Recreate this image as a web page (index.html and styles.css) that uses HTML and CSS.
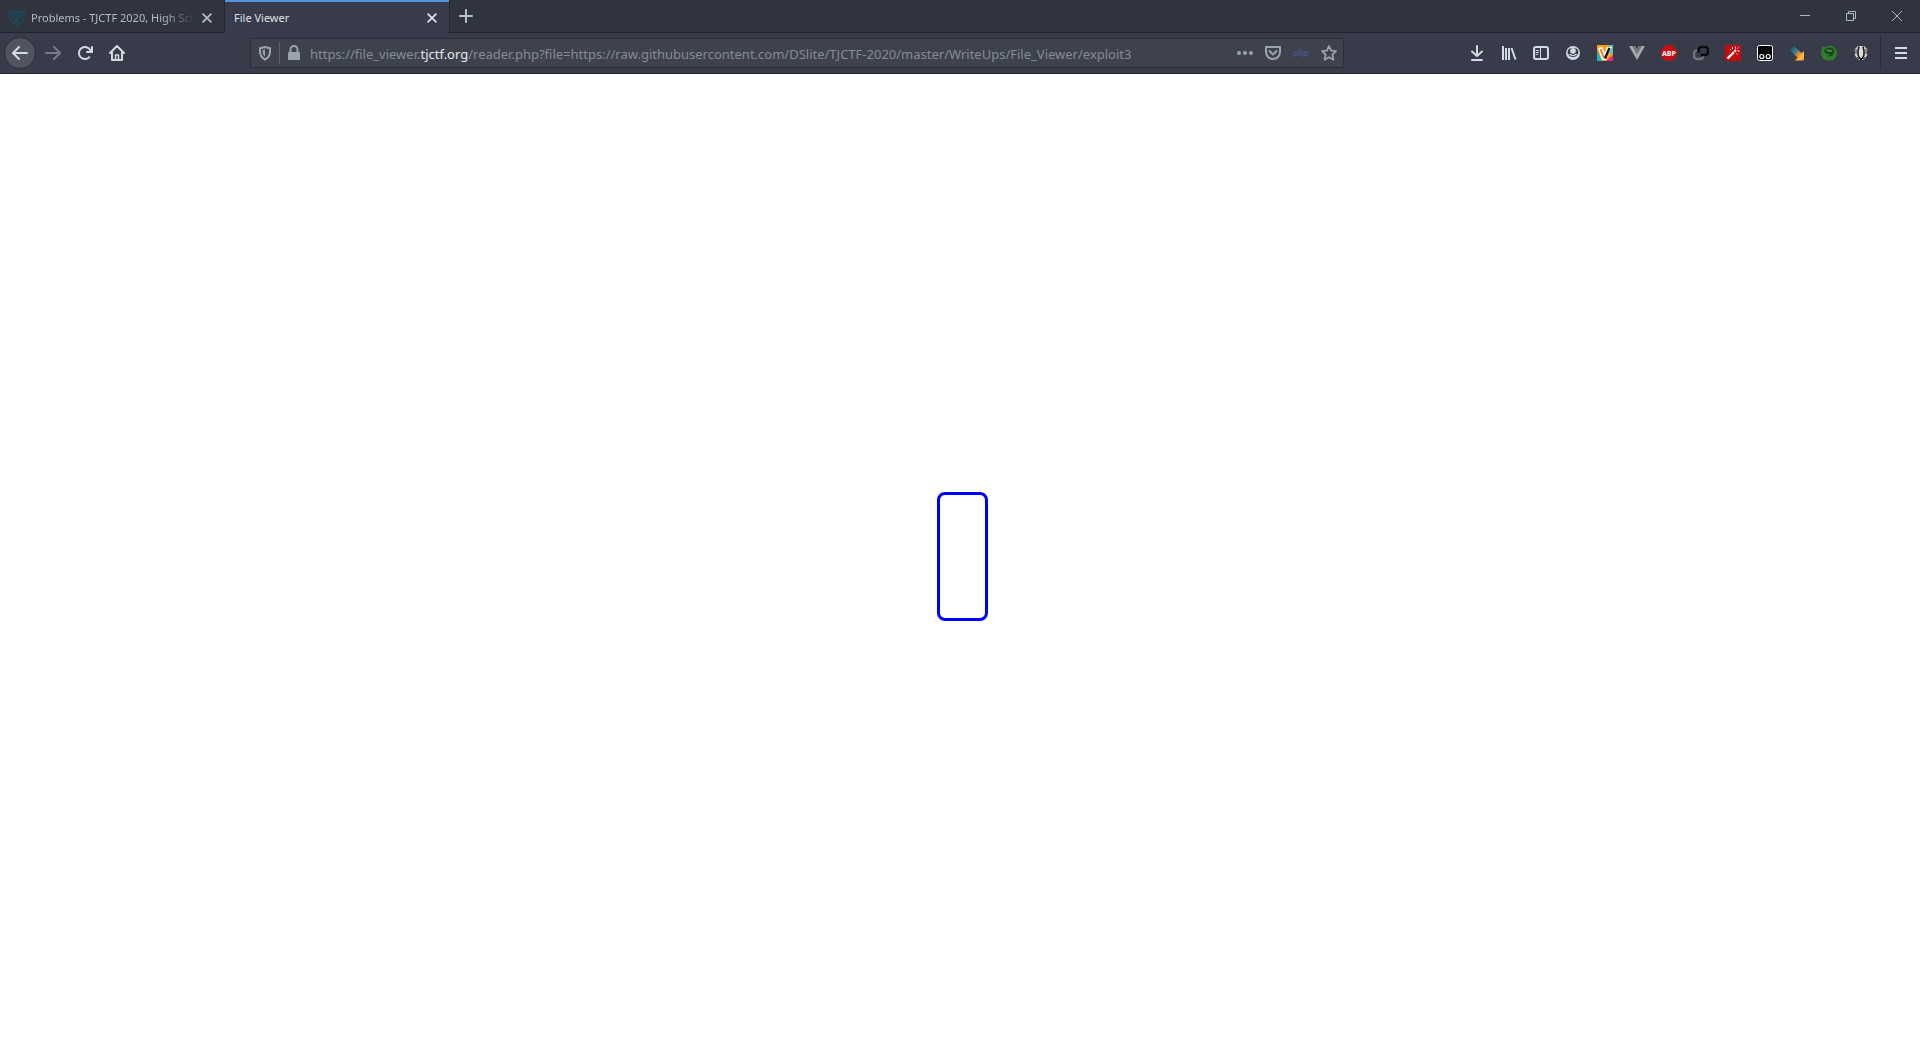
FILE: index.html
```html
<!DOCTYPE html>
<html lang="en">
<head>
<meta charset="utf-8">
<title>File Viewer</title>
<link rel="stylesheet" href="styles.css">
</head>
<body>
<header class="chrome">
  <div class="tabstrip">
    <div class="tab">
      <svg class="favicon" viewBox="0 0 16 16" fill="none" stroke="#1b4a5c" stroke-width="1.5"><path d="M1 2h14v6l-3 5-4 2-4-2-3-5zM3 4l5 9 5-9M5 3l3 3 3-3M8 6v8"/></svg>
      <span class="tab-title faded">Problems - TJCTF 2020, High School</span>
      <button class="close" aria-label="Close tab"><svg viewBox="0 0 16 16" class="icon"><path d="M3.500 3.500l9 9M12.500 3.500l-9 9" stroke="currentColor" stroke-width="2" stroke-linecap="round"/></svg></button>
    </div>
    <div class="tab active">
      <span class="tab-title">File Viewer</span>
      <button class="close" aria-label="Close tab"><svg viewBox="0 0 16 16" class="icon"><path d="M3.500 3.500l9 9M12.500 3.500l-9 9" stroke="currentColor" stroke-width="2" stroke-linecap="round"/></svg></button>
    </div>
    <div class="strip-rest">
      <button class="new-tab" aria-label="New tab"><svg viewBox="0 0 16 16" class="icon"><path d="M8 2v12M2 8h12" stroke="currentColor" stroke-width="2" stroke-linecap="round"/></svg></button>
      <div class="window-controls">
        <button aria-label="Minimize"><svg viewBox="0 0 12 12"><path d="M1 5.500h10"/></svg></button>
        <button aria-label="Restore"><svg viewBox="0 0 12 12"><path d="M1.500 3.500h7v7h-7zM3.500 3V1.500h7v7H9"/></svg></button>
        <button aria-label="Close"><svg viewBox="0 0 12 12"><path d="M1 1l10 10M11 1L1 11"/></svg></button>
      </div>
    </div>
  </div>
  <nav class="toolbar">
    <div class="nav-buttons">
      <button class="back" aria-label="Back"><svg viewBox="0 0 16 16" class="icon line"><path d="M15 8H1.500M7 2L1 8l6 6"/></svg></button>
      <button class="dim" aria-label="Forward"><svg viewBox="0 0 16 16" class="icon line"><path d="M1 8h13.500M9 2l6 6-6 6"/></svg></button>
      <button aria-label="Reload"><svg viewBox="0 0 16 16" class="icon"><path fill="currentColor" d="M15 1a1 1 0 0 0-1 1v2.418A6.995 6.995 0 1 0 8 15a6.954 6.954 0 0 0 4.950-2.050 1 1 0 0 0-1.414-1.414A5.019 5.019 0 1 1 12.549 6H10a1 1 0 0 0 0 2h5a1 1 0 0 0 1-1V2a1 1 0 0 0-1-1z"/></svg></button>
      <button aria-label="Home"><svg viewBox="0 0 16 16" class="icon line"><path d="M1 8l7-7 7 7M3 7v8h10V7"/><path d="M6.500 15v-5h3v5" stroke-width="1.500"/></svg></button>
    </div>
    <div class="urlbar">
      <button aria-label="Tracking protection"><svg viewBox="0 0 16 16" class="icon"><path d="M8 2l5 1.200v3.300c0 4-2 6.500-5 8-3-1.500-5-4-5-8V3.200z" fill="none" stroke="currentColor" stroke-width="2" stroke-linejoin="round"/><path d="M8 4.500v7c-1.800-1.500-2.500-3-2.500-6.300z" fill="currentColor"/></svg></button>
      <span class="divider"></span>
      <button class="lock" aria-label="Site information"><svg viewBox="0 0 16 16" class="icon"><path d="M4.500 7V4.500a3.500 3.500 0 0 1 7 0V7" fill="none" stroke="currentColor" stroke-width="2"/><rect x="2" y="7" width="12" height="8" rx="1" fill="currentColor"/></svg></button>
      <div class="url">https://file_viewer.<b>tjctf.org</b>/reader.php?file=https://raw.githubusercontent.com/DSlite/TJCTF-2020/master/WriteUps/File_Viewer/exploit3</div>
      <button aria-label="Page actions"><svg viewBox="0 0 16 16" class="icon"><g fill="currentColor"><circle cx="2" cy="8" r="2"/><circle cx="8" cy="8" r="2"/><circle cx="14" cy="8" r="2"/></g></svg></button>
      <button aria-label="Save to Pocket"><svg viewBox="0 0 16 16" class="icon line"><path d="M1 2h14v5a7 7 0 0 1-14 0zM4.500 6L8 9.500 11.500 6"/></svg></button>
      <button class="php" aria-label="PHP">php</button>
      <button aria-label="Bookmark"><svg viewBox="0 0 16 16" class="icon line"><path d="M8 1l2.100 4.700 4.900.500-3.600 3.400 1 5.100L8 12.200l-4.400 2.500 1-5.100L1 6.200l4.900-.5z" stroke-width="1.800"/></svg></button>
    </div>
    <div class="actions">
      <button aria-label="Downloads"><svg viewBox="0 0 16 16" class="icon line"><path d="M8 1v10M3 6.500L8 11l5-4.500M3 15h10"/></svg></button>
      <button aria-label="Library"><svg viewBox="0 0 16 16" class="icon line"><path d="M2 1v14M5 3v12M8 3v12M10.500 3l4 11.500" stroke-linecap="butt"/></svg></button>
      <button aria-label="Sidebars"><svg viewBox="0 0 16 16" class="icon line"><rect x="1" y="2" width="14" height="12" rx="2"/><path d="M7.500 2v12M3 5.500h2.500M3 7.500h2.500M3 9.500h1.500" stroke-width="1"/></svg></button>
      <button aria-label="Account"><svg viewBox="0 0 16 16" class="icon"><circle cx="8" cy="8" r="7" fill="currentColor"/><path d="M4.500 3.500h7a5 5 0 0 1 1.300 6q-1.500-.300-2.300-.800a3.500 3.500 0 0 1-5 0q-.800.500-2.300.800a5 5 0 0 1 1.300-6z" fill="#383c4a"/><circle cx="8" cy="6" r="2.800" fill="currentColor"/><path d="M4 10.500q4 2.500 8 0" fill="none" stroke="#383c4a"/></svg></button>
      <button aria-label="Violentmonkey"><svg viewBox="0 0 16 16" class="icon"><rect width="16" height="16" rx="1" fill="#ff9d16"/><path d="M0 5l5 11H0z" fill="#15b6c3"/><path d="M16 0v10l-5-3 1-7z" fill="#57c7ae"/><path d="M9 16l7-6v6z" fill="#ed2681"/><path d="M1 3l4 12h4l6-13h-5l-2 6-3-6z" fill="#fff"/><path d="M3.500 4L7 13" stroke="#f47622" stroke-width="2"/><path d="M12.500 3L8 13.500" stroke="#15151a" stroke-width="2.500"/></svg></button>
      <button aria-label="Vue devtools"><svg viewBox="0 0 16 16" class="icon"><path d="M0 1h3.500L8 9l4.500-8H16L8 15z" fill="#aaa"/><path d="M3.500 1H6.500L8 4l1.500-3h3L8 9z" fill="#777"/></svg></button>
      <button aria-label="Adblock Plus"><svg viewBox="0 0 16 16" class="icon"><path d="M5 0h6l5 5v6l-5 5H5l-5-5V5z" fill="#c70d13"/><text x="8" y="11" text-anchor="middle" class="abp">ABP</text></svg></button>
      <button aria-label="Link extension"><svg viewBox="0 0 16 16" class="icon"><path d="M5 5.500H4a3 3 0 0 0-3 3V11a3 3 0 0 0 3 3h3.500a3 3 0 0 0 3-3v-.5" fill="none" stroke="#73747a" stroke-width="2.400"/><path d="M5.500 7.500V5a3 3 0 0 1 3-3H12a3 3 0 0 1 3 3v2a3 3 0 0 1-3 3H7.500" fill="none" stroke="#0b0b0f" stroke-width="2.600"/></svg></button>
      <button aria-label="Magic wand"><svg viewBox="0 0 16 16" class="icon"><path d="M0 0h16v16H0z" fill="#c60b0f"/><path d="M2.500 13.500l6.500-6.500" stroke="#fff" stroke-width="2.400"/><path d="M9.500 6.500l1.500-1.500" stroke="#fff" stroke-width="2.200"/><path d="M7.500 2v2M5 4l1 1M10.500 1.500v2M13.500 2.500l-1 1M12.500 6h2M11.500 8.500l1 1" stroke="#fff" stroke-width="1"/></svg></button>
      <button aria-label="Tampermonkey"><svg viewBox="0 0 16 16" class="icon"><rect x=".5" y=".5" width="15" height="15" rx="2" fill="#050505" stroke="#fff"/><circle cx="4.800" cy="11.500" r="2" fill="none" stroke="#fff" stroke-width="1.200"/><circle cx="11.200" cy="11.500" r="2" fill="none" stroke="#fff" stroke-width="1.200"/></svg></button>
      <button aria-label="Arrow extension"><svg viewBox="0 0 16 16" class="icon"><defs><linearGradient id="arrow" x1="0" y1="0" x2="1" y2="1"><stop offset=".15" stop-color="#235d7c"/><stop offset=".42" stop-color="#3b8299"/><stop offset=".58" stop-color="#e08a1c"/><stop offset=".8" stop-color="#ffc04a"/><stop offset="1" stop-color="#df820f"/></linearGradient></defs><path d="M1 5l4-4 7.500 7L15 6v9.500H6l2.500-3z" fill="url(#arrow)"/></svg></button>
      <button aria-label="Green fox"><svg viewBox="0 0 16 16" class="icon"><path d="M1 1l2.500 1.500Q8-.5 12.500 2 16 4.500 16 8.500q-.500 6.500-8 7.200Q.500 15 0 8.500 0 6 1 4z" fill="#347c31"/><path d="M3.500 4.500Q8 .500 12.500 4q2 3-.500 6-3 2.500-6 1 3-.500 3-2-2 .500-4-.500Q2.500 7 3.500 4.500z" fill="#194a1b"/><path d="M5.500 4.500Q8 7 11 5.500" stroke="#4b9c42" stroke-width="1.500" fill="none"/></svg></button>
      <button aria-label="Privacy Badger"><svg viewBox="0 0 16 16" class="icon"><path d="M5 1h6l3 3 1 4-2 4-3 3H6l-3-3-2-4 1-4z" fill="#ddd"/><path d="M6 1.500L5 6v4l2 4M10 1.500L11 6v4l-2 4" stroke="#1b1b1b" stroke-width="1.600" fill="none"/><path d="M3 4v5M13 4v5M1.500 6v3M14.500 6v3M4 12l2 2M12 12l-2 2" stroke="#333"/><path d="M7 13h2v2H7z" fill="#111"/></svg></button>
    </div>
    <button class="menu" aria-label="Open menu"><svg viewBox="0 0 16 16" class="icon"><path d="M2 3h12M2 8h12M2 13h12" stroke="currentColor" stroke-width="2"/></svg></button>
  </nav>
</header>
<main class="page"><div class="viewer"></div></main>
</body>
</html>
```
FILE: styles.css
```css
* { box-sizing: border-box; }
body {
  margin: 0;
  min-height: 100vh;
  display: flex;
  flex-direction: column;
  background: #fff;
  font-family: "Noto Sans", "Open Sans", sans-serif;
}
button {
  flex: none;
  display: flex;
  align-items: center;
  justify-content: center;
  padding: 0;
  border: 0;
  background: none;
  color: inherit;
  font: inherit;
}
.icon { width: 16px; height: 16px; flex: none; }
.line { fill: none; stroke: currentColor; stroke-width: 2; stroke-linecap: round; stroke-linejoin: round; }
.chrome { background: #383c4a; color: #d3dae3; }
.tabstrip { display: flex; height: 33px; }
.tab {
  display: flex;
  align-items: center;
  width: 224px;
  padding: 3px 9px 0;
  background: #2f343f;
  border-bottom: 1px solid #23262f;
  font-size: 11px;
  color: #b4bbc7;
}
.active {
  width: 226px;
  padding-top: 2px;
  border: solid #23262f;
  border-width: 0 1px;
  background: linear-gradient(#5294e2 2px, #383c4a 2px);
  color: #dce2ea;
}
.favicon { width: 16px; height: 16px; margin-right: 6px; flex: none; }
.tab-title { flex: 1; overflow: hidden; white-space: nowrap; }
.faded { mask-image: linear-gradient(to left, transparent, #000 32px); }
.close { width: 16px; height: 16px; margin-left: 4px; }
.close .icon { width: 14px; height: 14px; }
.strip-rest {
  flex: 1;
  display: flex;
  justify-content: space-between;
  background: #2f343f;
  border-bottom: 1px solid #23262f;
}
.new-tab { width: 32px; color: #b9c0cc; }
.window-controls { display: flex; }
.window-controls button { width: 46px; }
.window-controls svg { width: 12px; height: 12px; fill: none; stroke: #afb6c4; }
.toolbar {
  display: flex;
  align-items: center;
  height: 41px;
  border-bottom: 1px solid #23262f;
}
.nav-buttons { display: flex; padding-left: 4px; flex: none; }
.nav-buttons button { width: 32px; height: 32px; }
.nav-buttons .back { border-radius: 50%; background: #505460; border: 1px solid #2b2e38; margin-right: 1px; }
.dim { color: #777b87; }
.urlbar {
  flex: 1;
  min-width: 0;
  display: flex;
  align-items: center;
  height: 30px;
  margin-left: 117px;
  border: 1px solid #2b2e39;
  border-radius: 2px;
  background: #3e424d;
  color: #9da3ae;
}
.urlbar button { width: 28px; height: 28px; }
.divider { width: 1px; height: 22px; background: #5b5f6b; }
.url {
  flex: 1;
  min-width: 0;
  margin-left: 2px;
  padding-top: 2px;
  overflow: hidden;
  white-space: nowrap;
  font-size: 13px;
  line-height: 20px;
  color: #858b96;
}
.url b { font-weight: 400; color: #e3e8ef; }
.urlbar .php { padding-bottom: 2px; font: italic 9px "Noto Sans", sans-serif; color: #4b5aa5; }
.actions { display: flex; margin-left: 117px; flex: none; }
.actions button { width: 32px; height: 32px; }
.abp { font: 700 7px "Open Sans", sans-serif; fill: #fff; }
.menu { width: 40px; height: 34px; margin-left: 3px; border-left: 1px solid #2a2d37; }
.toolbar .menu { margin-right: 0; }
.page { flex: 1; display: flex; align-items: center; justify-content: center; padding: 0 0 2px 5px; }
.viewer { width: 51px; height: 129px; border: 3px solid #00f; border-radius: 8px; }
```
